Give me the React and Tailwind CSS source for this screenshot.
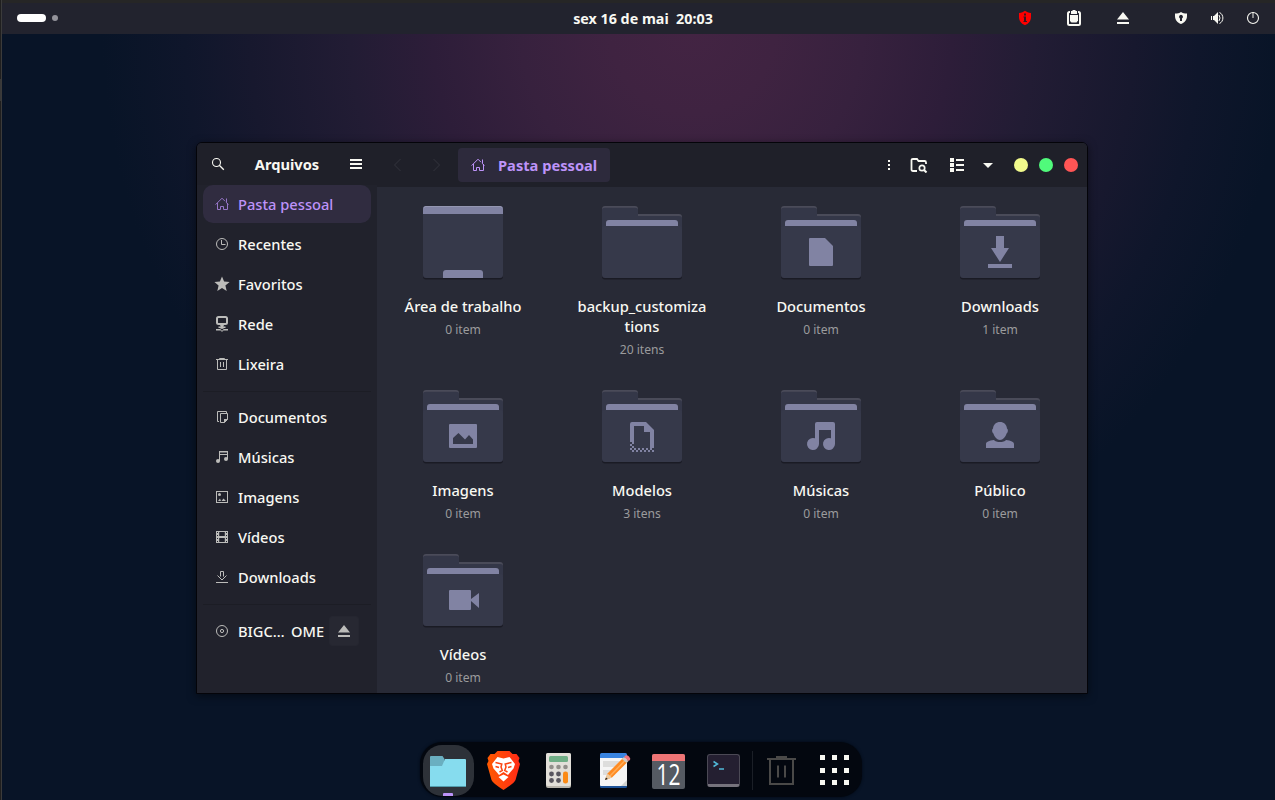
import React from 'react';

const Svg = ({ s = 16, w, h, vb, className = '', children }) => (
  <svg width={w || s} height={h || s} viewBox={vb || `0 0 ${w || s} ${h || s}`} className={`block shrink-0 ${className}`} fill="currentColor">
    {children}
  </svg>
);

const HomeIcon = () => (
  <Svg>
    <path fill="none" stroke="currentColor" d="M1.6 8.6L8 2.2L11 5.2M14.4 8.6L12.5 6.7M12.5 6.8V2.5M3.5 7V13.5H6.5V10.5H9.5V13.5H13.5V7" />
  </Svg>
);
const ClockIcon = () => (
  <Svg>
    <g fill="none" stroke="currentColor">
      <circle cx="8" cy="8" r="5.5" />
      <path d="M7.5 4V8.5H11.5" />
    </g>
  </Svg>
);
const StarIcon = () => (
  <Svg>
    <path d="M8 .4L10.1 5.5L15.6 6L11.4 9.6L12.7 15L8 12.1L3.3 15L4.6 9.6L.4 6L5.9 5.5Z" />
  </Svg>
);
const NetworkIcon = () => (
  <Svg>
    <rect x="3" y="1" width="10" height="7" rx="1.5" fill="none" stroke="currentColor" strokeWidth="2" />
    <path d="M6 9H10L8.8 11.6H7.2ZM2 13H6V14.500H2ZM10 13H14V14.500H10ZM4.500 10.500H11.500V12H4.500Z" />
    <circle cx="8" cy="13.6" r="1.5" fill="none" stroke="currentColor" />
  </Svg>
);
const TrashIcon = () => (
  <Svg>
    <path fill="none" stroke="currentColor" d="M2 3.5H14M5.5 3V2.5H10.5V3M3.5 3.5V13.5H12.5V3.5M6.5 6V11M9.5 6V11" />
  </Svg>
);
const DocsIcon = () => (
  <Svg>
    <path fill="none" stroke="currentColor" d="M5 12.5H3.5V2.5H12.5V4M6.5 4.5H13.5V10.5L10.5 13.5H6.5Z" />
    <path d="M10 10H14L10 14Z" />
  </Svg>
);
const NotesIcon = () => (
  <Svg>
    <path d="M5 2H14V10H13V6H6V12H5ZM6 3.4V5H13V3.4Z" fillRule="evenodd" />
    <circle cx="4" cy="12" r="2" />
    <circle cx="12" cy="10" r="2" />
  </Svg>
);
const ImageIcon = () => (
  <Svg>
    <rect x="2.5" y="2.5" width="11" height="11" fill="none" stroke="currentColor" />
    <circle cx="5.5" cy="5.5" r="1.5" />
    <path d="M4 12L6 9.6L7 12ZM7.5 12L9.5 9.6L12 12Z" />
  </Svg>
);
const FilmIcon = () => (
  <Svg>
    <path fillRule="evenodd" d="M2 2H14V14H2ZM3 3V4H4V3ZM3 6V7H4V6ZM3 9V10H4V9ZM3 12V13H4V12ZM12 3V4H13V3ZM12 6V7H13V6ZM12 9V10H13V9ZM12 12V13H13V12ZM5.2 3V7H10.8V3ZM5.2 9V13H10.8V9Z" />
  </Svg>
);
const DownloadIcon = () => (
  <Svg>
    <path fill="none" stroke="currentColor" d="M2 13.5H14M6.5 7.5V2.5H9.5V7.5M3.5 6.5L8 11L12.5 6.5" />
  </Svg>
);
const DiscIcon = () => (
  <Svg>
    <g fill="none" stroke="currentColor">
      <circle cx="8" cy="8" r="5.5" />
      <circle cx="8" cy="8" r="1.6" />
    </g>
  </Svg>
);
const EjectIcon = () => (
  <Svg>
    <path d="M8 2L14 9.5H2ZM2 12H14V14H2Z" />
  </Svg>
);

const SideRow = ({ icon, label, active }) => (
  <div className={`mx-1.5 mb-0.5 flex h-[38px] shrink-0 items-center gap-2 rounded-[10px] pl-[11px] ${active ? 'bg-[#302c40] text-[#bd93f9]' : 'text-[#f8f8f2]'}`}>
    <span className={active ? 'text-[#9776c9]' : 'text-[#bcbcba]'}>{icon}</span>
    <span className="text-[14.67px] leading-5 font-medium">{label}</span>
  </div>
);

const glyphs = {
  doc: <path d="M29 32H44L52 40V59Q52 60 51 60H29Q28 60 28 59V33Q28 32 29 32Z" />,
  down: <path d="M36 30H44V42H49L40 56L31 42H36ZM28 58H52V62H28Z" />,
  image: <path fillRule="evenodd" d="M27 34H53Q54 34 54 35V57Q54 58 53 58H27Q26 58 26 57V35Q26 34 27 34ZM30 54H50V49.5L46 45L42 49.5L35.5 43L30 48Z" />,
  template: (
    <>
      <path fillRule="evenodd" d="M30 32H44L52 40V58H48V42H42V36H32V50H28V34Q28 32 30 32Z" />
      <path d="M28 50h2v2h-2zM32 50h-2v2h2zM28 54h2v2h-2zM30 52h2v2h-2zM30 56h2v2h-2zM28 58h2v2h-2zM30 60h2v2h-2zM32 58h2v2h-2zM34 60h2v2h-2zM36 58h2v2h-2zM38 60h2v2h-2zM40 58h2v2h-2zM42 60h2v2h-2zM44 58h2v2h-2zM46 60h2v2h-2zM48 58h2v2h-2zM50 60h2v2h-2z" />
    </>
  ),
  music: <path d="M36 32H52Q54 32 54 34V54A6 6 0 1 1 50 48.3V40H38V54A6 6 0 1 1 34 48.3V34Q34 32 36 32Z" />,
  person: <path d="M40 32C44 32 46.5 34.5 47 38.5C48.5 39.5 48 42.500 46.600 43.500C45.500 47 43 50 40 50C37 50 34.500 47 33.400 43.500C32 42.500 31.500 39.500 33 38.500C33.500 34.500 36 32 40 32ZM34 50C36 52.700 44 52.700 46 50C51 50.500 54 52 54 54V58H26V54C26 52 29 50.500 34 50Z" />,
  video: <path d="M27 36H47Q48 36 48 37V45L56 39V54L48 47V55Q48 56 47 56H27Q26 56 26 55V37Q26 36 27 36Z" />,
};

const FolderArt = ({ glyph }) => (
  <Svg w={80} h={76}>
    <path d="M0 4V3Q0 0 3 0H33Q36 0 36 3V8H77Q80 8 80 11V71H0Z" fill="#4a4b59" />
    <path d="M0 5V4Q0 1.800 3 1.800H33Q36 1.800 36 4V9.900H77Q80 9.900 80 12V71H0Z" fill="#343748" />
    <path d="M4 20V17Q4 14 7 14H73Q76 14 76 17V20Z" fill="#8183a3" />
    <rect y="22" width="80" height="51.500" rx="3" fill="#1a1b24" />
    <path d="M0 23Q0 20 3 20H77Q80 20 80 23V69Q80 72 77 72H3Q0 72 0 69Z" fill="#36394a" />
    {glyph && <g fill="#8183a3">{glyphs[glyph]}</g>}
  </Svg>
);

const DesktopArt = () => (
  <Svg w={80} h={76}>
    <rect y="10" width="80" height="63.500" rx="3" fill="#1a1b24" />
    <rect width="80" height="72" rx="3" fill="#36394a" />
    <path d="M0 8V3Q0 0 3 0H77Q80 0 80 3V8Z" fill="#8183a3" />
    <path d="M1 2Q1.500 .5 3 .5H77Q78.500 .5 79 2" fill="none" stroke="#9496b1" />
    <path d="M20 72V67Q20 64 23 64H57Q60 64 60 67V72Z" fill="#8183a3" />
  </Svg>
);

const files = [
  ['Área de trabalho', '0 item', 'desktop'],
  ['backup_customiza\ntions', '20 itens', null],
  ['Documentos', '0 item', 'doc'],
  ['Downloads', '1 item', 'down'],
  ['Imagens', '0 item', 'image'],
  ['Modelos', '3 itens', 'template'],
  ['Músicas', '0 item', 'music'],
  ['Público', '0 item', 'person'],
  ['Vídeos', '0 item', 'video'],
];

const TopBar = () => (
  <header className="grid h-[34px] shrink-0 grid-cols-3 items-center border-t-[3px] border-[#262626] bg-[#22232e] pb-[1px] text-[#f8f8f2]">
    <div className="flex items-center gap-1.5 pl-[15px]">
      <div className="h-2 w-[29px] rounded-full bg-white" />
      <div className="size-1.5 rounded-full bg-[#93939a]" />
    </div>
    <div className="pt-px pl-[9px] text-center text-[14.3px] leading-5 font-bold whitespace-pre">sex 16 de mai  20:03</div>
    <div className="flex items-center justify-end pr-[14px]">
      <Svg className="mr-[33px]">
        <path fill="#ff0000" d="M8 .8C9.500 2 11.500 2.800 14 3V7C14 11 11.500 13.800 8 15.200C4.500 13.800 2 11 2 7V3C4.500 2.800 6.500 2 8 .8Z" />
        <path fill="#3b1620" d="M7 3.500H9V5.500H7ZM6.500 6.500H9V11H10V12H6.500V11H7V7.500H6.500Z" />
      </Svg>
      <Svg className="mr-[33px]">
        <rect x="2" y="2" width="12" height="13" rx="1.500" fill="none" stroke="currentColor" strokeWidth="2" />
        <path fill="#22232e" d="M4 1H12V5H4Z" />
        <path d="M5 1H6.500V0H9.500V1H11V4H5Z" />
        <path d="M4 5H12V10.500L10.500 12.500H5.500L4 11Z" />
      </Svg>
      <span className="mr-[42px]"><EjectIcon /></span>
      <Svg className="mr-5">
        <path fillRule="evenodd" d="M8 2C9.500 3 11.500 3.500 14 3.600V6C14 10 11.500 12.700 8 14C4.500 12.700 2 10 2 6V3.600C4.500 3.500 6.500 3 8 2ZM8 4.800A2 2 0 0 0 7 8.500V11H9V8.500A2 2 0 0 0 8 4.800Z" />
      </Svg>
      <Svg className="mr-5">
        <path d="M2 6H3V10H2ZM4 6H5L9 2V14L5 10H4Z" />
        <path fill="none" stroke="currentColor" d="M10 5Q12 8 10 11M10.500 2.500C15 4.500 15 11.500 10.500 13.500" />
      </Svg>
      <Svg>
        <circle cx="8" cy="8" r="5.500" fill="none" stroke="currentColor" strokeWidth="1.100" />
        <path d="M7.400 2H8.600V8H7.400Z" opacity=".8" />
      </Svg>
    </div>
  </header>
);

const Sidebar = () => (
  <aside className="flex w-[180px] shrink-0 flex-col bg-[#21222c]">
    <div className="flex h-[42px] shrink-0 items-center bg-[#1f2029] pl-[13px] text-[#f8f8f2]">
      <Svg>
        <g fill="none" stroke="currentColor">
          <circle cx="6.500" cy="6.500" r="4" strokeWidth="1.100" />
          <path d="M9.300 9.300L13.800 13.800" strokeWidth="1.300" />
        </g>
      </Svg>
      <div className="w-[122px] pb-px text-center text-[14.67px] leading-5 font-bold">Arquivos</div>
      <Svg>
        <path d="M2 3H14V5H2ZM2 7H14V9H2ZM2 11H14V13H2Z" />
      </Svg>
    </div>
    <SideRow icon={<HomeIcon />} label="Pasta pessoal" active />
    <SideRow icon={<ClockIcon />} label="Recentes" />
    <SideRow icon={<StarIcon />} label="Favoritos" />
    <SideRow icon={<NetworkIcon />} label="Rede" />
    <SideRow icon={<TrashIcon />} label="Lixeira" />
    <div className="mx-1.5 mt-1.5 mb-1.5 h-px shrink-0 bg-[#1c1d25]" />
    <SideRow icon={<DocsIcon />} label="Documentos" />
    <SideRow icon={<NotesIcon />} label="Músicas" />
    <SideRow icon={<ImageIcon />} label="Imagens" />
    <SideRow icon={<FilmIcon />} label="Vídeos" />
    <SideRow icon={<DownloadIcon />} label="Downloads" />
    <div className="mx-1.5 mt-1.5 mb-[7px] h-px shrink-0 bg-[#1c1d25]" />
    <div className="flex h-[38px] items-center pl-[17px] text-[#bcbcba]">
      <DiscIcon />
      <div className="ml-2 flex w-[91px] shrink-0 gap-[7px] text-[14.67px] leading-5 font-medium text-[#f8f8f2]">
        <span className="w-[46px] whitespace-nowrap">BIGC…</span>
        <span>OME</span>
      </div>
      <div className="flex size-[30px] shrink-0 items-center justify-center rounded-[3px] border border-[#252630] bg-[#272832]"><EjectIcon /></div>
    </div>
  </aside>
);

const MainPane = () => (
  <main className="flex flex-1 flex-col bg-[#282a36]">
    <div className="flex h-11 shrink-0 items-center bg-[#1f2029] text-[#f8f8f2]">
      <Svg className="ml-[13px] text-[#33343d]"><path fill="none" stroke="currentColor" d="M10.500 2L4.500 8L10.500 14" /></Svg>
      <Svg className="ml-[22px] text-[#33343d]"><path fill="none" stroke="currentColor" d="M5.500 2L11.500 8L5.500 14" /></Svg>
      <div className="ml-3.5 flex h-[34px] w-[152px] items-center gap-3 rounded-[4px] bg-[#2d2a3c] pl-3 text-[#bd93f9]">
        <HomeIcon />
        <span className="text-[14.67px] leading-5 font-bold whitespace-nowrap">Pasta pessoal</span>
      </div>
      <Svg className="ml-[271px]"><path d="M7 3H9V5H7ZM7 7H9V9H7ZM7 11H9V13H7Z" /></Svg>
      <Svg w={18} h={16} className="ml-[13px]">
        <path fill="none" stroke="currentColor" strokeWidth="1.800" d="M7 14H3Q1.500 14 1.500 12.500V3Q1.500 2 3 2H7L8.500 4H14.500Q16 4 16 5.500V7" />
        <circle cx="12" cy="11" r="2.700" fill="none" stroke="currentColor" strokeWidth="1.700" />
        <path stroke="currentColor" strokeWidth="2" d="M13.800 12.700L16.500 15.500" />
      </Svg>
      <Svg className="ml-[21px]">
        <path d="M1 1H5V5H1ZM1 6H5V10H1ZM1 11H5V15H1ZM7 2H15V4H7ZM7 7H15V9H7ZM7 12H15V14H7Z" />
      </Svg>
      <Svg className="ml-[15px]"><path d="M3 6H13L8 11Z" /></Svg>
      <div className="ml-[18px] flex gap-[11px]">
        <div className="size-3.5 rounded-full bg-[#f1fa8c]" />
        <div className="size-3.5 rounded-full bg-[#50fa7b]" />
        <div className="size-3.5 rounded-full bg-[#ff5555]" />
      </div>
    </div>
    <div className="-ml-px grid w-[716px] grid-cols-[repeat(4,179px)] pt-[19px]">
      {files.map(([name, count, glyph], i) => (
        <div key={name} className={`-ml-[5px] flex flex-col items-center text-center ${i < 4 ? 'h-[184px]' : 'h-[164px]'}`}>
          {glyph === 'desktop' ? <DesktopArt /> : <FolderArt glyph={glyph} />}
          <div className="mt-[14px] text-[14.67px] leading-5 font-medium whitespace-pre text-[#f8f8f2]">{name}</div>
          <div className="mt-[5px] text-[12.1px] leading-[18px] text-[#9b9b9d]">{count}</div>
        </div>
      ))}
    </div>
  </main>
);

const Slot = ({ children, className = '' }) => (
  <div className={`relative flex size-[51px] shrink-0 items-center justify-center ${className}`}>{children}</div>
);

const Dock = () => (
  <div className="flex h-[55px] w-[442px] gap-1 rounded-[22px] bg-[#03070f] pt-[3px] pl-[3px] shadow-[0_0_3px_#020812]">
    <Slot className="rounded-[19px] bg-[#2d3138] pt-px pl-px">
      <Svg w={38} h={34}>
        <path d="M0 31V3Q0 2 1 2H12.500L14.500 5V12H0Z" fill="#6aafc0" />
        <path d="M0 12H12L15 5H35Q36 5 36 6V32Q36 33 35 33H1Q0 33 0 32Z" fill="#86dcee" />
        <path d="M0 32.500H36" stroke="#529cac" />
      </Svg>
      <div className="absolute bottom-0 left-[20px] h-[3px] w-2.5 rounded-t-[1px] bg-[#bd93f9]" />
    </Slot>
    <Slot className="pb-px pl-px">
      <Svg w={34} h={40}>
        <defs>
          <linearGradient id="lion" x1="0" x2="1"><stop stopColor="#ff5a00" /><stop offset="1" stopColor="#ff2a16" /></linearGradient>
        </defs>
        <path fill="url(#lion)" d="M10.500 1H22.500L25.500 4L29.500 4L32.500 8L31.500 11L33 14L28.500 30Q27.500 33 16.500 40Q5.500 33 4.500 30L0 14L1.500 11L.5 8L3.500 4L7.500 4Z" />
        <path fill="#fff" d="M10.500 7L16.500 8.500L22.500 7L28 14L26.500 18.500L23 22.500L21 25L16.500 22L12 25L10 22.500L6.500 18.500L5 14ZM11.500 27L16.500 24.500L21.500 27L16.500 31.500Z" />
        <path fill="none" stroke="#fb4310" strokeWidth="1.500" d="M8.500 12.500L14.800 14L14 17L15.300 20.500L12.500 22M24.500 12.500L18.200 14L19 17L17.700 20.500L20.500 22M8.500 16.500L12 17.500M24.500 16.500L21 17.500" />
      </Svg>
    </Slot>
    <Slot className="pb-px pl-px">
      <Svg w={26} h={36}>
        <rect x="0" y="1" width="25" height="35" rx="2" fill="#b9b5ad" />
        <rect x="0" y="1" width="25" height="33" rx="2" fill="#e2dfd9" />
        <rect x="3" y="4" width="19" height="6" rx="1.500" fill="#70ae86" />
        {[5.5, 12.5, 19.5].map((x) => <circle key={x} cx={x} cy="15" r="2.300" fill="#918e8a" />)}
        {[22, 28.5].map((y) => [5.5, 12.5].map((x) => <circle key={`${x}-${y}`} cx={x} cy={y} r="2.400" fill="#59565f" />))}
        <rect x="17" y="19.500" width="5" height="12" rx="2.300" fill="#fb8a16" />
      </Svg>
    </Slot>
    <Slot className="pb-px pl-[3px]">
      <Svg w={32} h={36}>
        <rect x="1" y="2" width="27" height="34" rx="1.500" fill="#1e5398" />
        <rect x="1" y="1" width="27" height="8" rx="1.500" fill="#3984e0" />
        <path d="M1 6H28V34H2Q1 34 1 33Z" fill="#f5f5f5" />
        <path d="M4 9H21V15H4ZM4 18H16V23H4Z" fill="#dddddc" />
        <path d="M28 28L22 34H28Z" fill="#d2d2d0" />
        <path d="M6 28L8.500 21.500L24 6L28.500 10L13 25.500Z" fill="#ff8b22" />
        <path d="M11 24L26 8.500" stroke="#ffae5a" strokeWidth="1.500" />
        <path d="M6 28L8.500 21.500L13 25.500Z" fill="#ebcaa0" />
        <path d="M6 28L7 25.500L8.800 27Z" fill="#222" />
        <path d="M23 7L25 5L29.500 9L27.500 11Z" fill="#d1ccc5" />
        <path d="M25 5L26.500 3.500Q28 2.500 30 4.500Q32 6.500 31 8L29.500 9Z" fill="#ee747d" />
      </Svg>
    </Slot>
    <Slot className="pt-0.5">
      <div className="flex h-[35px] w-[33px] flex-col rounded-[2px] bg-[#555a62]">
        <div className="h-[7px] shrink-0 rounded-t-[2px] bg-[#ee7475]" />
        <div className="flex h-[26px] scale-x-[0.7] items-center justify-center font-['Open_Sans',sans-serif] text-[30px] leading-[26px] text-white">12</div>
      </div>
    </Slot>
    <Slot>
      <div className="flex h-[33px] w-[33px] flex-col rounded-[3px] border border-b-[3px] border-[#4b4955] border-b-[#76737d] bg-[#241f31] pt-[5px] pl-[5px]">
        <Svg w={13} h={11}>
          <path fill="none" stroke="#50b9d8" strokeWidth="1.500" d="M.5 1.500L4.500 4L.5 6.500M6 9H11" />
        </Svg>
      </div>
    </Slot>
    <div className="-mx-[1px] mt-1.5 h-[39px] w-px shrink-0 bg-[#1b1f27]" />
    <Slot className="pr-px pb-px">
      <Svg w={30} h={32}>
        <path fill="none" stroke="#4a4948" strokeWidth="2" d="M1 5H30M11 4V3H20V4M4 5V30H27V5M12 11.500V23.500M19 11.500V23.500" />
      </Svg>
    </Slot>
    <Slot className="-ml-0.5 pb-px">
      <div className="grid grid-cols-3 gap-x-[7px] gap-y-[7.5px]">
        {Array.from({ length: 9 }, (_, i) => <div key={i} className="size-[5px] bg-[#f8f8f2]" />)}
      </div>
    </Slot>
  </div>
);

export default function App() {
  return (
    <div className="flex h-[800px] w-[1275px] overflow-hidden bg-[#081427] font-['Noto_Sans',sans-serif]">
      <div className="w-0.5 shrink-0 border-r border-[#3b3b3b] bg-[#1f1f1f] pt-[79px]">
        <div className="h-[22px] w-px bg-[#383838]" />
      </div>
      <div className="flex h-full flex-1 flex-col bg-[radial-gradient(ellipse_590px_590px_at_690px_30px,#432443_0%,#3f2341_14%,#37213e_29%,#2d1d39_44%,#221c34_58%,#17182e_75%,#0f162b_86%,#081427_100%)]">
        <TopBar />
        <div className="mt-[108px] ml-[194px] flex h-[552px] w-[892px] shrink-0 overflow-hidden rounded-t-[6px] border border-[#040409] shadow-[0_2px_8px_rgba(0,0,0,0.5)]">
          <Sidebar />
          <MainPane />
        </div>
        <div className="mt-12 ml-[418px]">
          <Dock />
        </div>
      </div>
    </div>
  );
}
